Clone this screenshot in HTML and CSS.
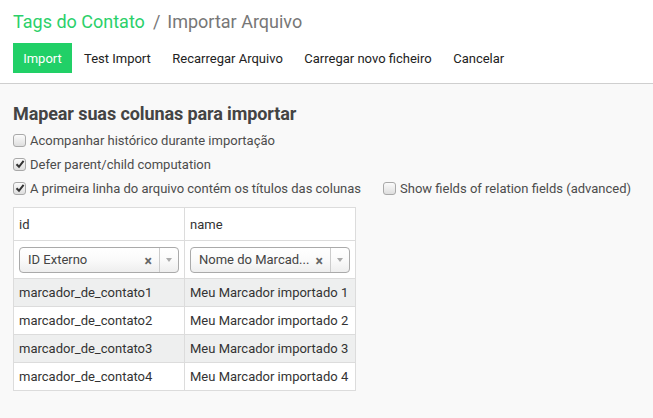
FILE: index.html
```html
<!DOCTYPE html>
<html>
<head>
<meta charset="utf-8">
<link rel="stylesheet" href="styles.css">
</head>
<body>
<div class="header">
  <div class="breadcrumb"><span class="crumb-link">Tags do Contato</span><span class="sep">/</span><span class="crumb-active">Importar Arquivo</span></div>
  <div class="buttons">
    <button class="btn btn-primary">Import</button>
    <button class="btn">Test Import</button>
    <button class="btn">Recarregar Arquivo</button>
    <button class="btn">Carregar novo ficheiro</button>
    <button class="btn">Cancelar</button>
  </div>
</div>
<div class="content">
  <h2 class="title">Mapear suas colunas para importar</h2>
  <label class="check"><span class="box"></span>Acompanhar histórico durante importação</label>
  <label class="check"><span class="box"><svg viewBox="0 0 10 10" width="10" height="10"><path d="M1.5 5.2 L4 7.8 L8.6 1.8" fill="none" stroke="#333" stroke-width="2"/></svg></span>Defer parent/child computation</label>
  <div class="check-line">
    <label class="check"><span class="box"><svg viewBox="0 0 10 10" width="10" height="10"><path d="M1.5 5.2 L4 7.8 L8.6 1.8" fill="none" stroke="#333" stroke-width="2"/></svg></span>A primeira linha do arquivo contém os títulos das colunas</label>
    <label class="check"><span class="box"></span>Show fields of relation fields (advanced)</label>
  </div>
  <table class="grid">
    <thead>
      <tr class="head"><th>id</th><th>name</th></tr>
      <tr class="selects">
        <td><div class="select"><span class="sel-text">ID Externo</span><span class="clear">×</span><span class="arrow"></span></div></td>
        <td><div class="select"><span class="sel-text">Nome do Marcad...</span><span class="clear">×</span><span class="arrow"></span></div></td>
      </tr>
    </thead>
    <tbody>
      <tr class="odd"><td>marcador_de_contato1</td><td>Meu Marcador importado 1</td></tr>
      <tr><td>marcador_de_contato2</td><td>Meu Marcador importado 2</td></tr>
      <tr class="odd"><td>marcador_de_contato3</td><td>Meu Marcador importado 3</td></tr>
      <tr><td>marcador_de_contato4</td><td>Meu Marcador importado 4</td></tr>
    </tbody>
  </table>
</div>
</body>
</html>
```
FILE: styles.css
```css
html, body {
  margin: 0;
  padding: 0;
  background: #f9f9f9;
  font-family: Roboto, "Liberation Sans", sans-serif;
  font-size: 13px;
  color: #4c4c4c;
}
.header {
  background: #fff;
  border-bottom: 1px solid #cfcfcf;
  padding: 9px 13px 10px 13px;
  height: 64px;
}
.breadcrumb {
  font-size: 18px;
  line-height: 24px;
  height: 24px;
  margin-top: 1px;
}
.crumb-link { color: #2bd06a; }
.sep { color: #777; margin: 0 7px 0 8px; }
.crumb-active { color: #777; }
.buttons {
  display: flex;
  margin-top: 9px;
  height: 30px;
}
.btn {
  font-family: Roboto, "Liberation Sans", sans-serif;
  font-size: 13px;
  border: none;
  background: transparent;
  color: #222;
  padding: 0 10px;
  height: 30px;
  margin-right: 1.5px;
}
.btn-primary {
  background: #21d067;
  color: #fff;
  width: 59px;
  margin-right: 2px;
}
.content {
  padding: 19px 13px 0 13px;
}
.title {
  margin: 0 0 3px 0;
  font-size: 18px;
  font-weight: bold;
  color: #444;
  line-height: 22px;
  letter-spacing: -0.1px;
}
.check {
  display: flex;
  align-items: center;
  height: 24px;
  color: #4c4c4c;
}
.box {
  width: 13px;
  height: 13px;
  box-sizing: border-box;
  border: 1px solid #a9a9a9;
  border-radius: 3px;
  background: linear-gradient(#fbfbfb, #dedede);
  margin-right: 4px;
  display: flex;
  align-items: center;
  justify-content: center;
}
.box svg { display: block; }
.check-line {
  display: flex;
  gap: 22px;
}
.grid {
  border-collapse: collapse;
  margin-top: 7px;
  background: #fff;
}
.grid th, .grid td {
  border: 1px solid #dcdcdc;
  text-align: left;
  font-weight: normal;
  padding: 0 5px;
  color: #333;
}
.grid th:first-child, .grid td:first-child { width: 160px; }
.grid th:last-child, .grid td:last-child { width: 160px; }
.head th { height: 32px; }
.selects td { height: 37px; }
.grid tbody td { height: 27px; }
.grid tr.odd td { background: #eeefef; }
.select {
  display: flex;
  align-items: center;
  height: 26px;
  border: 1px solid #aaa;
  border-radius: 4px;
  background: linear-gradient(#fff 0%, #fafafa 50%, #eee 100%);
  box-sizing: border-box;
  padding-left: 8px;
  color: #444;
}
.sel-text { flex: 1; white-space: nowrap; overflow: hidden; }
.clear {
  font-size: 14px;
  color: #666;
  font-weight: bold;
  margin-right: 7px;
  margin-top: 2px;
}
.arrow {
  width: 18px;
  height: 100%;
  border-left: 1px solid #ccc;
  position: relative;
}
.arrow::after {
  content: "";
  position: absolute;
  left: 6px;
  top: 10px;
  border-left: 3px solid transparent;
  border-right: 3px solid transparent;
  border-top: 4px solid #aaa;
}
```
